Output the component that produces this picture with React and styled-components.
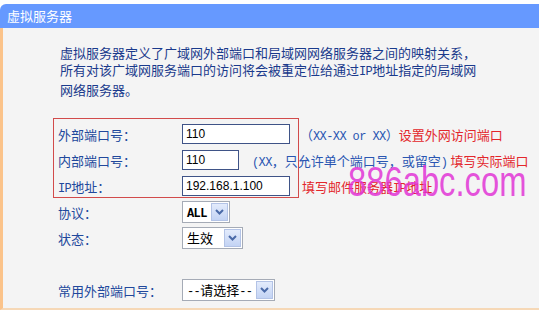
import React from 'react';
import styled, { createGlobalStyle } from 'styled-components';

const Global = createGlobalStyle`
  html, body { margin: 0; padding: 0; background: #fff; }
  body { font-family: "Noto Sans CJK SC", "Liberation Sans", sans-serif; }
`;

const Page = styled.div`
  width: 539px;
  height: 311px;
  padding-top: 4px;
  box-sizing: border-box;
  background: #fff;
  overflow: hidden;
`;

const Header = styled.div`
  height: 24px;
  background: #6699ff;
  border-top-left-radius: 6px;
  color: #fff;
  font-size: 13px;
  line-height: 24px;
  padding-left: 7px;
`;

const Body = styled.div`
  height: 282px;
  box-sizing: border-box;
  background: #f4f4f4;
  border-left: 3px solid #fbc38a;
  border-bottom: 2px solid #f6d8b6;
  padding: 16px 0 0 55px;
`;

const Desc = styled.p`
  margin: 0 0 23px 2px;
  font-size: 13px;
  line-height: 17px;
  color: #1a3a8c;
`;

const Latin = styled.span`
  font-family: "Liberation Mono", monospace;
  font-size: 12px;
  letter-spacing: -0.6px;
`;

const Form = styled.div`
  position: relative;
  display: grid;
  grid-template-columns: 124px auto;
  grid-auto-rows: 26px;
  align-items: center;
  justify-items: start;
`;

const Label = styled.div`
  font-size: 13px;
  color: #21489c;
  white-space: nowrap;
`;

const Field = styled.div`
  display: flex;
  align-items: center;
  white-space: nowrap;
`;

const Input = styled.input`
  box-sizing: border-box;
  width: ${p => p.$w}px;
  height: 20px;
  border: 1px solid #3f5387;
  padding: 0 3px;
  margin: 0;
  background: #fff;
  color: #000;
  font-family: "Liberation Sans", sans-serif;
  font-size: 12px;
  outline: none;
`;

const Hint = styled.span`
  margin-left: ${p => p.$gap}px;
  font-size: 13px;
  color: #2a56b2;
`;

const Note = styled.span`
  margin-left: ${p => p.$gap || 0}px;
  font-size: 13px;
  color: #e3262b;
`;

const Select = styled.div`
  box-sizing: border-box;
  display: flex;
  align-items: stretch;
  width: ${p => p.$w}px;
  height: 22px;
  padding: 1px;
  border: 1px solid #a5abb6;
  background: #fff;
`;

const SelectText = styled.span`
  flex: 1;
  padding-left: 3px;
  font-size: 13px;
  line-height: 18px;
  color: #000;
  white-space: nowrap;
  overflow: hidden;
`;

const SelectLatin = styled.span`
  font-family: "Liberation Mono", monospace;
  font-size: 12px;
  letter-spacing: -0.6px;
  font-weight: ${p => (p.$bold ? 700 : 400)};
`;

const DropButton = styled.span`
  box-sizing: border-box;
  width: 17px;
  display: flex;
  align-items: center;
  justify-content: center;
  border: 1px solid #b3c3e6;
  background: linear-gradient(#e3ebfc, #c3d3f4);
`;

const Spacer = styled.div`
  grid-column: 1 / -1;
`;

const RedBox = styled.div`
  position: absolute;
  left: -5px;
  top: -3px;
  width: 246px;
  height: 80px;
  box-sizing: border-box;
  border: 1px solid #d24b4b;
  pointer-events: none;
`;

const Watermark = styled.div`
  position: absolute;
  left: 290px;
  top: 40px;
  font-family: "Liberation Sans", sans-serif;
  font-size: 42px;
  line-height: 42px;
  color: rgba(226, 52, 214, 0.85);
  transform: scaleX(0.78);
  transform-origin: left center;
  white-space: nowrap;
  pointer-events: none;
`;

const Chevron = () => (
  <svg width="9" height="6" viewBox="0 0 9 6">
    <polyline points="1,1 4.5,4.5 8,1" fill="none" stroke="#4a6aa8" strokeWidth="2" />
  </svg>
);

const Drop = ({ w, children }) => (
  <Select $w={w}>
    <SelectText>{children}</SelectText>
    <DropButton><Chevron /></DropButton>
  </Select>
);

export default function App() {
  return (
    <>
      <Global />
      <Page>
        <Header>虚拟服务器</Header>
        <Body>
          <Desc>
            虚拟服务器定义了广域网外部端口和局域网网络服务器之间的映射关系，<br />
            所有对该广域网服务端口的访问将会被重定位给通过<Latin>IP</Latin>地址指定的局域网<br />
            网络服务器。
          </Desc>
          <Form>
            <Label>外部端口号：</Label>
            <Field>
              <Input $w={108} readOnly value="110" />
              <Hint $gap={10}>（<Latin>XX-XX or XX</Latin>）</Hint>
              <Note>设置外网访问端口</Note>
            </Field>

            <Label>内部端口号：</Label>
            <Field>
              <Input $w={57} readOnly value="110" />
              <Hint $gap={13}><Latin>(XX</Latin>，只允许单个端口号，或留空<Latin>)</Latin></Hint>
              <Note $gap={3}>填写实际端口</Note>
            </Field>

            <Label><Latin>IP</Latin>地址：</Label>
            <Field>
              <Input $w={108} readOnly value="192.168.1.100" />
              <Note $gap={12}>填写邮件服务器<Latin>IP</Latin>地址</Note>
            </Field>

            <Label>协议：</Label>
            <Field>
              <Drop w={48}><SelectLatin $bold>ALL</SelectLatin></Drop>
            </Field>

            <Label>状态：</Label>
            <Field>
              <Drop w={61}>生效</Drop>
            </Field>

            <Spacer />

            <Label>常用外部端口号：</Label>
            <Field>
              <Drop w={93}><SelectLatin>--</SelectLatin>请选择<SelectLatin>--</SelectLatin></Drop>
            </Field>

            <RedBox />
            <Watermark>886abc.com</Watermark>
          </Form>
        </Body>
      </Page>
    </>
  );
}
